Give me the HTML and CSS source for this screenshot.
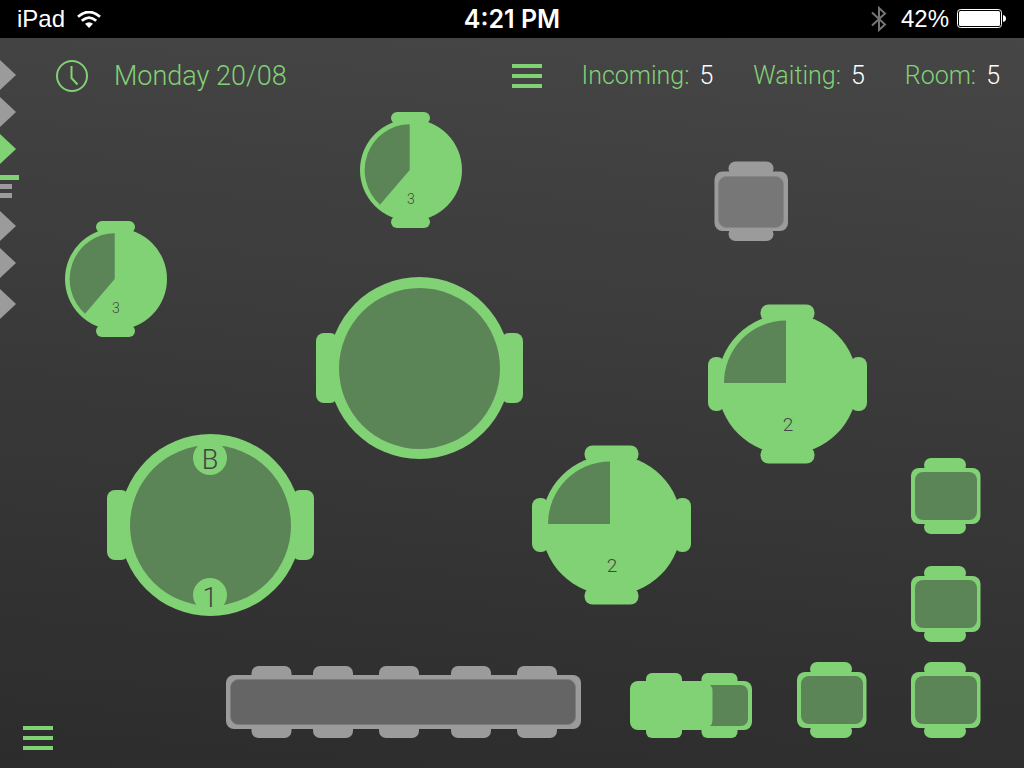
FILE: index.html
```html
<!DOCTYPE html>
<html lang="en">
<head>
<meta charset="utf-8">
<meta name="viewport" content="width=device-width, initial-scale=1">
<title>Floor plan</title>
<link rel="stylesheet" href="styles.css">
</head>
<body>
<svg class="defs" aria-hidden="true">
  <symbol id="round-small" viewBox="0 0 102 116">
    <g class="fill">
      <rect x="31" y="0" width="39" height="12" rx="6"/>
      <rect x="31" y="104" width="39" height="12" rx="6"/>
      <path d="M34 8h33v100H34z"/>
      <circle cx="51" cy="58" r="51"/>
    </g>
    <path class="inner" d="M49.700 58V12.200A45.300 46 0 0 0 20 92.700Z"/>
  </symbol>
  <symbol id="round-medium" viewBox="0 0 160 160">
    <g class="fill">
      <rect x="52.500" y="0.500" width="54" height="17" rx="8"/>
      <rect x="52.500" y="142.500" width="54" height="17" rx="8"/>
      <rect x="0" y="53" width="17" height="54" rx="8"/>
      <rect x="142" y="53" width="17" height="54" rx="8"/>
      <circle cx="79.500" cy="80" r="70"/>
    </g>
    <path class="inner" d="M78 79V16.500A62 62.500 0 0 0 16 79Z"/>
  </symbol>
  <symbol id="round-large" viewBox="0 0 207 182">
    <g class="fill">
      <rect x="0" y="56" width="22" height="70" rx="8"/>
      <rect x="185" y="56" width="22" height="70" rx="8"/>
      <circle cx="103.500" cy="91" r="91"/>
    </g>
    <circle class="inner" cx="103.500" cy="91.500" r="80.500"/>
  </symbol>
  <symbol id="square" viewBox="0 0 70 76">
    <g class="fill">
      <rect x="13" y="0" width="42" height="14" rx="7"/>
      <rect x="13" y="62" width="42" height="14" rx="7"/>
      <rect x="0" y="10" width="69.500" height="56" rx="8"/>
    </g>
    <rect class="inner" x="4" y="14" width="62" height="48" rx="8"/>
  </symbol>
</svg>

<div class="screen">
  <header class="status">
    <div class="status-left">
      <span>iPad</span>
      <svg width="24" height="17" viewBox="0 0 24 17" role="img" aria-label="Wi-Fi">
        <g fill="none" stroke="#fff" stroke-width="2.800">
          <path d="M1 5.700Q12-3.600 23 5.700"/>
          <path d="M4.800 9.800Q12 3.500 19.200 9.800"/>
        </g>
        <path fill="#fff" d="M8 12.800Q12 9.500 16 12.800L12 17Z"/>
      </svg>
    </div>
    <time class="status-time">4:21 PM</time>
    <div class="status-right">
      <svg class="bluetooth" width="16" height="26" viewBox="0 0 16 26" role="img" aria-label="Bluetooth">
        <path fill="none" stroke="#747474" stroke-width="2" d="M1 6.500L14 18.500L8 24V2L14 7.500L1 19.500"/>
      </svg>
      <span>42%</span>
      <svg width="50" height="20" viewBox="0 0 50 20" role="img" aria-label="Battery">
        <rect x=".5" y=".5" width="44" height="18" rx="3" fill="none" stroke="#fff"/>
        <rect x="2" y="2" width="41" height="15" rx="1.500" fill="#fff"/>
        <path fill="#fff" d="M46 6q3 .5 3 3.500t-3 3.500z"/>
      </svg>
    </div>
  </header>

  <main class="floor">
    <div class="toolbar">
      <svg class="clock" width="34" height="34" viewBox="0 0 34 34" aria-hidden="true">
        <g fill="none" stroke="#81d175" stroke-width="2">
          <circle cx="17" cy="17" r="15"/>
          <path d="M16.500 7V19L22.500 25.500"/>
        </g>
      </svg>
      <time class="date" datetime="08-20">Monday 20/08</time>
      <button class="menu" type="button" aria-label="Lists"><i></i><i></i><i></i></button>
      <dl class="counts">
        <div><dt>Incoming:</dt><dd>5</dd></div>
        <div><dt>Waiting:</dt><dd>5</dd></div>
        <div><dt>Room:</dt><dd>5</dd></div>
      </dl>
    </div>

    <nav class="rail" aria-label="Times">
      <div class="rail-group">
        <button class="tip" type="button" aria-label="Slot 1"></button>
        <button class="tip" type="button" aria-label="Slot 2"></button>
        <button class="tip active" type="button" aria-label="Slot 3"></button>
      </div>
      <div class="ticks"><i class="active"></i><i></i><i></i></div>
      <div class="rail-group">
        <button class="tip" type="button" aria-label="Slot 4"></button>
        <button class="tip" type="button" aria-label="Slot 5"></button>
        <button class="tip last" type="button" aria-label="Slot 6"></button>
      </div>
    </nav>

    <button class="table t1" type="button"><svg width="102" height="116"><use href="#round-small"/><text class="label-small" x="51" y="92">3</text></svg></button>
    <button class="table t2" type="button"><svg width="102" height="116"><use href="#round-small"/><text class="label-small" x="51" y="92">3</text></svg></button>
    <button class="table t3" type="button" aria-label="Large round table"><svg width="207" height="182"><use href="#round-large"/></svg></button>
    <button class="table t4" type="button">
      <svg width="207" height="182">
        <use href="#round-large"/>
        <g class="fill"><circle cx="103" cy="24" r="17"/><circle cx="103" cy="161" r="17"/></g>
        <text class="label-large" x="103" y="35">B</text>
        <text class="label-large" x="103" y="173">1</text>
      </svg>
    </button>
    <button class="table t5" type="button"><svg width="160" height="160"><use href="#round-medium"/><text class="label-medium" x="80" y="127">2</text></svg></button>
    <button class="table t6" type="button"><svg width="160" height="160"><use href="#round-medium"/><text class="label-medium" x="80" y="127">2</text></svg></button>
    <button class="table off t7" type="button" aria-label="Closed square table">
      <svg width="74" height="80">
        <g class="fill">
          <rect x="14.500" y="0.500" width="45" height="14" rx="7"/>
          <rect x="14.500" y="66" width="45" height="14" rx="7"/>
          <rect x="0.500" y="10.500" width="73.500" height="59.500" rx="8"/>
        </g>
        <rect class="inner" x="4.500" y="15.500" width="65" height="51" rx="8"/>
      </svg>
    </button>
    <button class="table t8" type="button" aria-label="Square table"><svg width="70" height="76"><use href="#square"/></svg></button>
    <button class="table t9" type="button" aria-label="Square table"><svg width="70" height="76"><use href="#square"/></svg></button>
    <button class="table t10" type="button" aria-label="Square table"><svg width="70" height="76"><use href="#square"/></svg></button>
    <button class="table t11" type="button" aria-label="Square table"><svg width="70" height="76"><use href="#square"/></svg></button>
    <button class="table t12" type="button" aria-label="Double table">
      <svg width="122" height="65">
        <g class="fill">
          <rect x="16" y="0" width="36" height="14" rx="6"/>
          <rect x="71.500" y="0" width="36" height="14" rx="6"/>
          <rect x="16" y="51" width="36" height="14" rx="6"/>
          <rect x="71.500" y="51" width="36" height="14" rx="6"/>
          <rect x="0" y="8" width="122" height="49" rx="8"/>
        </g>
        <path class="inner" d="M80 12H111a7 7 0 0 1 7 7V46a7 7 0 0 1-7 7H80q2.500-2 2.500-6V18q0-4-2.500-6z"/>
      </svg>
    </button>
    <button class="table off long t13" type="button" aria-label="Closed long table">
      <svg width="355" height="72">
        <g class="fill">
          <rect x="25.500" y="0" width="40" height="72" rx="7"/>
          <rect x="87" y="0" width="40" height="72" rx="7"/>
          <rect x="153" y="0" width="40" height="72" rx="7"/>
          <rect x="225" y="0" width="40" height="72" rx="7"/>
          <rect x="291" y="0" width="40" height="72" rx="7"/>
          <rect x="0" y="9" width="355" height="54" rx="8"/>
        </g>
        <rect class="inner" x="4.500" y="13.500" width="345" height="45" rx="8"/>
      </svg>
    </button>

    <button class="menu menu-bottom" type="button" aria-label="Menu"><i></i><i></i><i></i></button>
  </main>
</div>
</body>
</html>
```

FILE: styles.css
```css
:root {
  --green: #81d175;
  --grey: #9b9b9b;
}

* { box-sizing: border-box; }

body {
  margin: 0;
  background: #2d2d2d;
  font-family: Roboto, "Open Sans", sans-serif;
}

button {
  margin: 0;
  padding: 0;
  border: 0;
  background: none;
  cursor: pointer;
}

svg { display: block; }

.defs {
  position: absolute;
  width: 0;
  height: 0;
}

.screen {
  display: flex;
  flex-direction: column;
  min-height: 100vh;
}

/* Status bar */
.status {
  display: grid;
  grid-template-columns: 1fr auto 1fr;
  align-items: center;
  height: 38px;
  padding: 0 17px;
  background: #000;
  color: #fff;
  font: 24px/36px "Liberation Sans", Arial, sans-serif;
}

.status-left,
.status-right {
  display: flex;
  align-items: center;
  gap: 12px;
}

.status-right {
  justify-content: flex-end;
  gap: 8px;
}

.bluetooth { margin-right: 6px; }

.status-time {
  font: 600 25px/36px Inter, sans-serif;
}

/* Floor plan */
.floor {
  position: relative;
  flex: 1;
  min-height: 730px;
  overflow: hidden;
  background: linear-gradient(185deg, #464646, #2c2c2c);
}

.toolbar {
  display: flex;
  align-items: center;
  height: 76px;
  padding: 0 24px 0 55px;
  color: var(--green);
  font-size: 27px;
  font-weight: 300;
  line-height: 32px;
}

.date { margin-left: 25px; }

.menu {
  display: flex;
  flex-direction: column;
  gap: 6px;
  width: 30px;
}

.menu i {
  height: 4px;
  background: var(--green);
}

.toolbar .menu { margin-left: auto; }

.menu-bottom {
  position: absolute;
  left: 23px;
  bottom: 18px;
}

.counts {
  display: flex;
  gap: 40px;
  margin: 0 0 0 40px;
  font-size: 25px;
}

.counts div {
  display: flex;
  gap: 10px;
}

.counts dt,
.counts dd { margin: 0; }

.counts dd { color: #fff; }

/* Time rail */
.rail {
  position: absolute;
  top: 22px;
  left: 0;
  display: flex;
  flex-direction: column;
  gap: 11px;
}

.rail-group {
  display: flex;
  flex-direction: column;
  gap: 7px;
}

.tip {
  width: 16px;
  height: 30px;
  background: var(--grey);
  clip-path: polygon(0 0, 100% 50%, 0 100%);
}

.tip.last { margin-top: 4px; }

.ticks {
  display: flex;
  flex-direction: column;
  gap: 4px;
  padding-bottom: 2px;
}

.ticks i {
  width: 12px;
  height: 5px;
  background: var(--grey);
}

.ticks .active { width: 19px; }

.active,
.ticks .active { background: var(--green); }

/* Tables on the floor canvas */
.table { position: absolute; }

.fill { fill: var(--green); }
.inner { fill: #5c8557; }

.off .fill { fill: var(--grey); }
.off .inner { fill: #777; stroke: #868686; }
.long .inner { fill: #656565; stroke: #7c7c7c; }

.table text {
  fill: #444;
  font-family: Roboto, "Open Sans", sans-serif;
  font-weight: 300;
  text-anchor: middle;
}

.label-small { font-size: 14px; }
.label-medium { font-size: 19px; }
.label-large { font-size: 27px; }

.t1 { left: 360px; top: 74px; }
.t2 { left: 65px; top: 183px; }
.t3 { left: 316px; top: 239px; }
.t4 { left: 107px; top: 396px; }
.t5 { left: 708px; top: 266px; }
.t6 { left: 532px; top: 407px; }
.t7 { left: 714px; top: 123px; }
.t8 { left: 911px; top: 420px; }
.t9 { left: 911px; top: 528px; }
.t10 { left: 911px; top: 624px; }
.t11 { left: 797px; top: 624px; }
.t12 { left: 630px; top: 635px; }
.t13 { left: 226px; top: 628px; }
```
